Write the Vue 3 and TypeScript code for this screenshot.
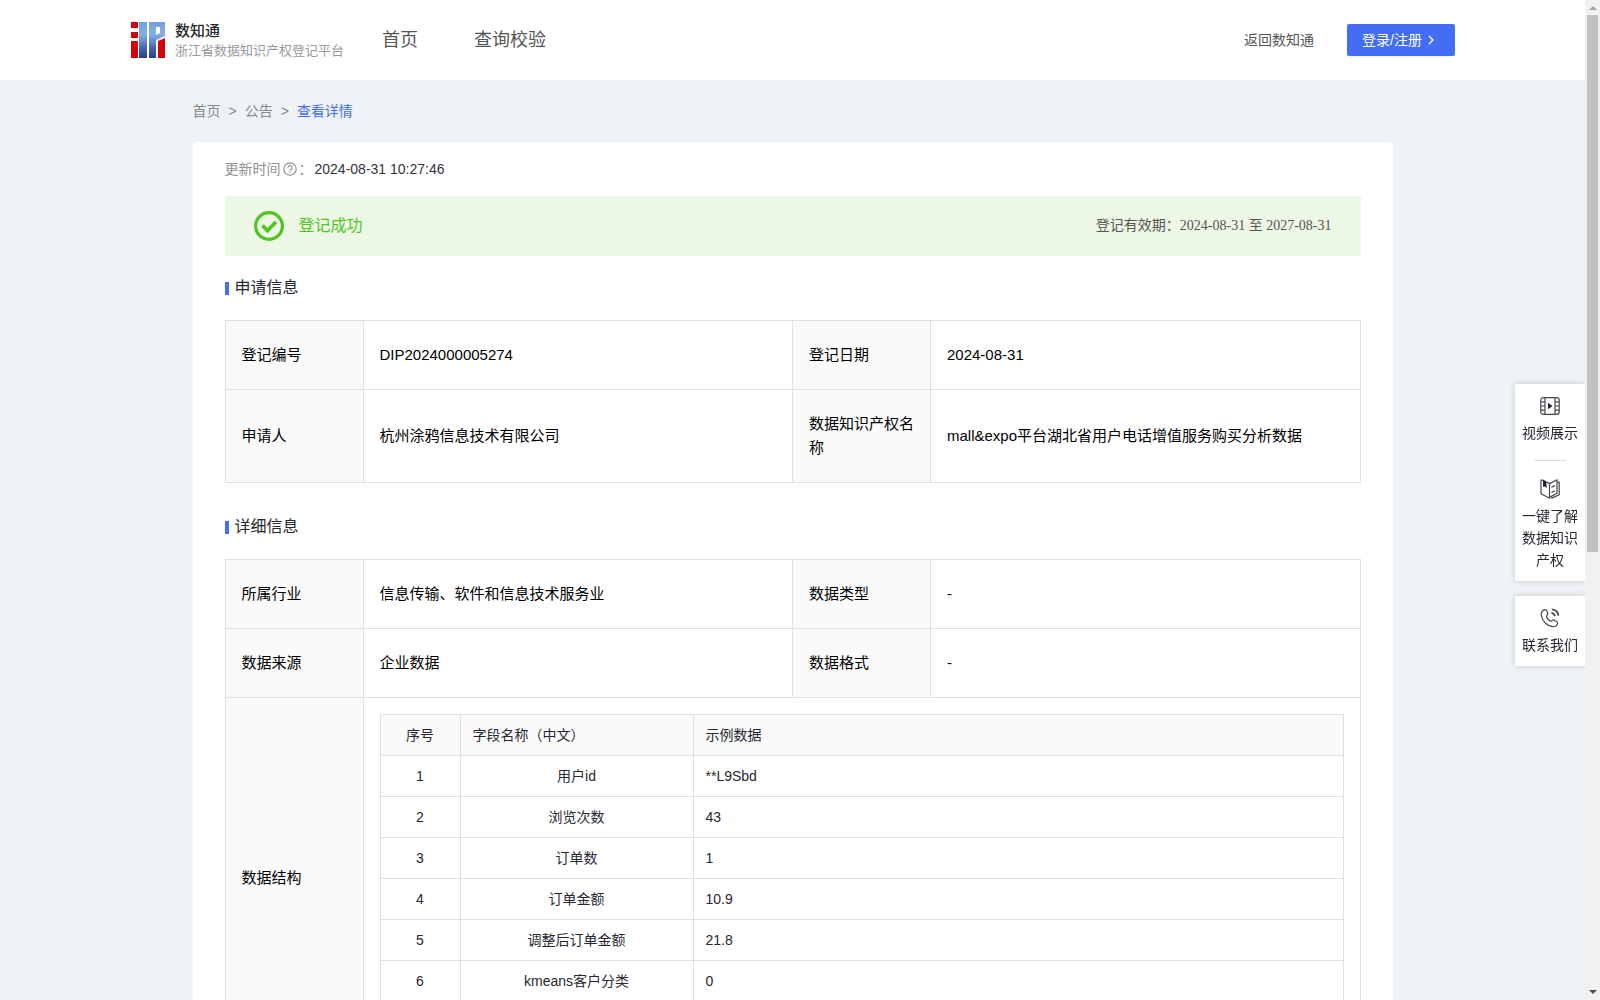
<script setup lang="ts">
interface FieldRow {
  no: number
  name: string
  sample: string
}

const fields: FieldRow[] = [
  { no: 1, name: '用户id', sample: '**L9Sbd' },
  { no: 2, name: '浏览次数', sample: '43' },
  { no: 3, name: '订单数', sample: '1' },
  { no: 4, name: '订单金额', sample: '10.9' },
  { no: 5, name: '调整后订单金额', sample: '21.8' },
  { no: 6, name: 'kmeans客户分类', sample: '0' },
]
</script>

<template>
  <div class="page">
    <div class="content">
      <header class="header">
        <div class="header-inner">
          <a class="brand" href="#">
            <svg class="logo" viewBox="0 0 34 36" aria-hidden="true">
              <defs>
                <linearGradient id="logoBlue" x1="0" y1="0" x2="0" y2="1">
                  <stop offset="0" stop-color="#6f9fdc" />
                  <stop offset="0.35" stop-color="#86b0e4" />
                  <stop offset="0.65" stop-color="#4c73b8" />
                  <stop offset="1" stop-color="#243f8c" />
                </linearGradient>
              </defs>
              <path fill="#d2050b" d="M0 0h7v6H0zM0 10h7v6H0zM0 19h7v17H0zM27 19l7-3v20h-7z" />
              <path fill="url(#logoBlue)" fill-rule="evenodd" d="M8 0h8v36H8zM18 0h16v14l-9 4v18h-7zM25 5v8l4-2V5z" />
            </svg>
            <span class="brand-text">
              <strong>数知通</strong>
              <span>浙江省数据知识产权登记平台</span>
            </span>
          </a>
          <nav class="nav">
            <a href="#">首页</a>
            <a href="#">查询校验</a>
          </nav>
          <a class="back" href="#">返回数知通</a>
          <button class="login" type="button">
            登录/注册
            <svg width="12" height="12" viewBox="0 0 12 12" fill="none" stroke="#fff" stroke-width="1.4" aria-hidden="true">
              <path d="M4 2l4 4-4 4" />
            </svg>
          </button>
        </div>
      </header>

      <main class="main">
        <nav class="crumbs">
          <a href="#">首页</a><span>&gt;</span><a href="#">公告</a><span>&gt;</span><a class="current" href="#">查看详情</a>
        </nav>

        <section class="card">
          <div class="updated">
            <span>更新时间</span>
            <svg width="14" height="14" viewBox="0 0 14 14" fill="none" stroke="#909196" aria-hidden="true">
              <circle cx="7" cy="7" r="6.2" stroke-width="1.2" />
              <path d="M5 5.6a2 2 0 1 1 2.8 1.9c-.6.3-.8.6-.8 1.2M7 9.6v1.2" stroke-width="1.2" />
            </svg>
            <span>：</span>
            <time>2024-08-31 10:27:46</time>
          </div>

          <div class="banner">
            <svg width="30" height="30" viewBox="0 0 30 30" fill="none" stroke="#50c51e" aria-hidden="true">
              <circle cx="15" cy="15" r="13.4" stroke-width="3.2" />
              <path d="M8.5 14.5l5 5 8.5-8.5" stroke-width="3.8" />
            </svg>
            <span class="banner-status">登记成功</span>
            <span class="banner-term">登记有效期：2024-08-31 至 2027-08-31</span>
          </div>

          <h2 class="title">申请信息</h2>
          <table class="info">
            <colgroup><col class="c-label" /><col /><col class="c-label" /><col /></colgroup>
            <tbody>
              <tr>
                <th scope="row">登记编号</th>
                <td>DIP2024000005274</td>
                <th scope="row">登记日期</th>
                <td>2024-08-31</td>
              </tr>
              <tr>
                <th scope="row">申请人</th>
                <td>杭州涂鸦信息技术有限公司</td>
                <th scope="row">数据知识产权名称</th>
                <td>mall&amp;expo平台湖北省用户电话增值服务购买分析数据</td>
              </tr>
            </tbody>
          </table>

          <h2 class="title">详细信息</h2>
          <table class="info">
            <colgroup><col class="c-label" /><col /><col class="c-label" /><col /></colgroup>
            <tbody>
              <tr>
                <th scope="row">所属行业</th>
                <td>信息传输、软件和信息技术服务业</td>
                <th scope="row">数据类型</th>
                <td>-</td>
              </tr>
              <tr>
                <th scope="row">数据来源</th>
                <td>企业数据</td>
                <th scope="row">数据格式</th>
                <td>-</td>
              </tr>
              <tr>
                <th scope="row">数据结构</th>
                <td class="structure" colspan="3">
                  <table class="fields">
                    <colgroup><col class="c-no" /><col class="c-name" /><col /></colgroup>
                    <thead>
                      <tr>
                        <th scope="col" class="center">序号</th>
                        <th scope="col">字段名称（中文）</th>
                        <th scope="col">示例数据</th>
                      </tr>
                    </thead>
                    <tbody>
                      <tr v-for="row in fields" :key="row.no">
                        <td class="center">{{ row.no }}</td>
                        <td class="center">{{ row.name }}</td>
                        <td>{{ row.sample }}</td>
                      </tr>
                    </tbody>
                  </table>
                </td>
              </tr>
            </tbody>
          </table>
        </section>
      </main>
    </div>

    <aside class="side">
      <div class="side-box">
        <a href="#">
          <svg width="20" height="20" viewBox="0 0 20 20" fill="none" stroke="#45464f" stroke-width="1.2" aria-hidden="true">
            <rect x="0.8" y="1.6" width="18.4" height="16.8" rx="2.4" />
            <path d="M5 1.6v16.8M15 1.6v16.8M1 5.8h4M1 10h4M1 14.2h4M15 5.8h4M15 10h4M15 14.2h4" />
            <path d="M8 6.8l4.6 3.2L8 13.2z" fill="#24252e" stroke="none" />
          </svg>
          <span>视频展示</span>
        </a>
        <hr />
        <a href="#">
          <svg width="20" height="20" viewBox="0 0 20 20" fill="none" stroke="#45464f" stroke-width="1.2" stroke-linejoin="round" aria-hidden="true">
            <path d="M3 1.2H1v13.600l8.500 4.400V4.600L6.500 3M9.500 4.600l7.500-3.800v13.500l-7.500 4.100M17 3.200h2.200v12.600l-8 3.600" />
            <path d="M11.500 8.200l3.500-1.600M11.500 13.400l3.500-1.600" />
            <path d="M3 .6l3.500 1.800v6.800L4.800 7.600 3 7.800z" fill="#24252e" stroke="none" />
          </svg>
          <span>一键了解数据知识产权</span>
        </a>
      </div>
      <div class="side-box">
        <a href="#">
          <svg width="20" height="20" viewBox="0 0 20 20" fill="none" stroke="#45464f" stroke-width="1.2" stroke-linejoin="round" aria-hidden="true">
            <path d="M4.8 1.6C2.4 2.3 1 4.3 1.3 7c.6 5.400 5.700 11.200 11.200 11.700 2.400.2 4.300-.7 5-2.600.4-1-.1-2-1-2.600l-2-1.300c-.9-.6-1.700-.4-2.400.4-.6.7-1.200.8-2 .3-1.500-1-2.600-2.200-3.500-3.800-.4-.8-.2-1.300.5-1.900.9-.7 1-1.500.5-2.500l-.8-1.900c-.4-1-1.100-1.400-2-1.200z" />
            <path d="M11.500 4.800c1.800.3 3.100 1.500 3.500 3.300M11.800 1.400c3.700.3 6.200 2.800 6.600 6.200" stroke-width="1.800" />
          </svg>
          <span>联系我们</span>
        </a>
      </div>
    </aside>

    <div class="scrollbar" aria-hidden="true">
      <i class="arrow up"></i>
      <i class="thumb"></i>
      <i class="arrow down"></i>
    </div>
  </div>
</template>

<style>
body {
  margin: 0;
  background: #eff3f6;
}
</style>

<style scoped>
.page {
  display: flex;
  height: 100vh;
  overflow: hidden;
  background: #eff3f6;
  color: #26272f;
  font: 14px/22px "Liberation Sans", "Noto Sans CJK SC", sans-serif;
}
.page *,
.page {
  box-sizing: border-box;
}
a {
  color: inherit;
  text-decoration: none;
}
svg {
  flex: none;
}
.content {
  flex: 1;
  min-width: 0;
}

.header {
  background: #fff;
}
.header-inner {
  display: flex;
  align-items: center;
  max-width: 1325px;
  height: 80px;
  margin: 0 auto;
  padding-left: 1px;
}
.brand {
  display: flex;
  align-items: center;
  gap: 10px;
  width: 251px;
}
.logo {
  width: 34px;
  height: 36px;
}
.brand-text {
  display: flex;
  flex-direction: column;
  padding-top: 2px;
  color: #98999c;
  font-size: 13px;
  line-height: 20px;
  white-space: nowrap;
}
.brand-text strong {
  color: #26272b;
  font-size: 15px;
  font-weight: 500;
}
.nav {
  display: flex;
  flex: 1;
  gap: 56px;
  color: #555;
  font-size: 18px;
}
.back {
  color: #555;
}
.login {
  display: flex;
  align-items: center;
  gap: 3px;
  width: 108px;
  height: 32px;
  margin-left: 33px;
  padding: 0 15px;
  border: 0;
  border-radius: 2px;
  background: #446df5;
  box-shadow: 0 2px 0 rgba(0, 0, 0, 0.04);
  color: #fff;
  font: inherit;
  white-space: nowrap;
}

.main {
  max-width: 1200px;
  margin: 0 auto;
}
.crumbs {
  display: flex;
  gap: 8px;
  padding: 20px 0;
  color: #87888c;
}
.crumbs .current {
  color: #446df5;
}
.card {
  min-height: 100vh;
  padding: 16px 32px;
  border-radius: 4px;
  background: #fff;
}
.updated {
  display: flex;
  align-items: center;
  color: #909196;
}
.updated svg {
  margin: 0 2px;
}
.updated time {
  margin-left: 2px;
  color: #32333c;
}
.banner {
  display: flex;
  align-items: center;
  height: 60px;
  margin-top: 16px;
  padding: 0 29px;
  background: #ecf7e6;
}
.banner-status {
  margin-left: 15px;
  color: #50c51e;
  font-size: 16px;
}
.banner-term {
  margin-left: auto;
  color: #555;
  font-family: "Liberation Serif", "Noto Sans CJK SC", serif;
}
.title {
  display: flex;
  align-items: center;
  gap: 6px;
  margin: 20px 0;
  font-size: 16px;
  font-weight: 400;
  line-height: 24px;
}
.title::before {
  width: 4px;
  height: 13px;
  background: #446df5;
  content: "";
}
.info + .title {
  margin-top: 32px;
}

table {
  width: 100%;
  border-collapse: collapse;
  table-layout: fixed;
}
th,
td {
  border: 1px solid #e0e0e0;
  font-weight: 400;
  text-align: left;
}
th {
  background: #fafafa;
}
.info {
  color: #000;
  font-size: 15px;
  line-height: 24px;
}
.info th,
.info td {
  padding: 22px 15px 22px 16px;
}
.c-label {
  width: 138px;
}
.info .structure {
  height: 361px;
  padding: 16px;
  vertical-align: top;
}
.fields {
  color: #26272f;
  font-size: 14px;
  line-height: 22px;
}
.info .fields th,
.info .fields td {
  padding: 9px 12px;
}
.c-no {
  width: 80px;
}
.c-name {
  width: 233px;
}
.info .fields .center {
  text-align: center;
}

.side {
  position: fixed;
  top: 384px;
  right: 15px;
  display: flex;
  flex-direction: column;
  gap: 15px;
  width: 70px;
  text-align: center;
}
.side-box {
  padding: 12px 6px 10px;
  background: #fff;
  box-shadow: 0 0 6px rgba(0, 0, 0, 0.18);
}
.side-box a {
  display: flex;
  flex-direction: column;
  align-items: center;
  gap: 6px;
}
.side-box hr {
  width: 32px;
  height: 1px;
  margin: 16px auto 18px;
  border: 0;
  background: #ddd;
}

.scrollbar {
  position: relative;
  z-index: 1;
  display: flex;
  flex: none;
  flex-direction: column;
  align-items: center;
  width: 15px;
  padding: 6px 0;
  background: #f1f1f1;
}
.thumb {
  width: 11px;
  height: calc(54vh - 3px);
  margin: 5px 0 auto;
  background: #c1c1c1;
}
.arrow {
  border: 4px solid transparent;
}
.arrow.up {
  border-top: 0;
  border-bottom-color: #a3a3a3;
}
.arrow.down {
  border-bottom: 0;
  border-top-color: #505050;
}
</style>
